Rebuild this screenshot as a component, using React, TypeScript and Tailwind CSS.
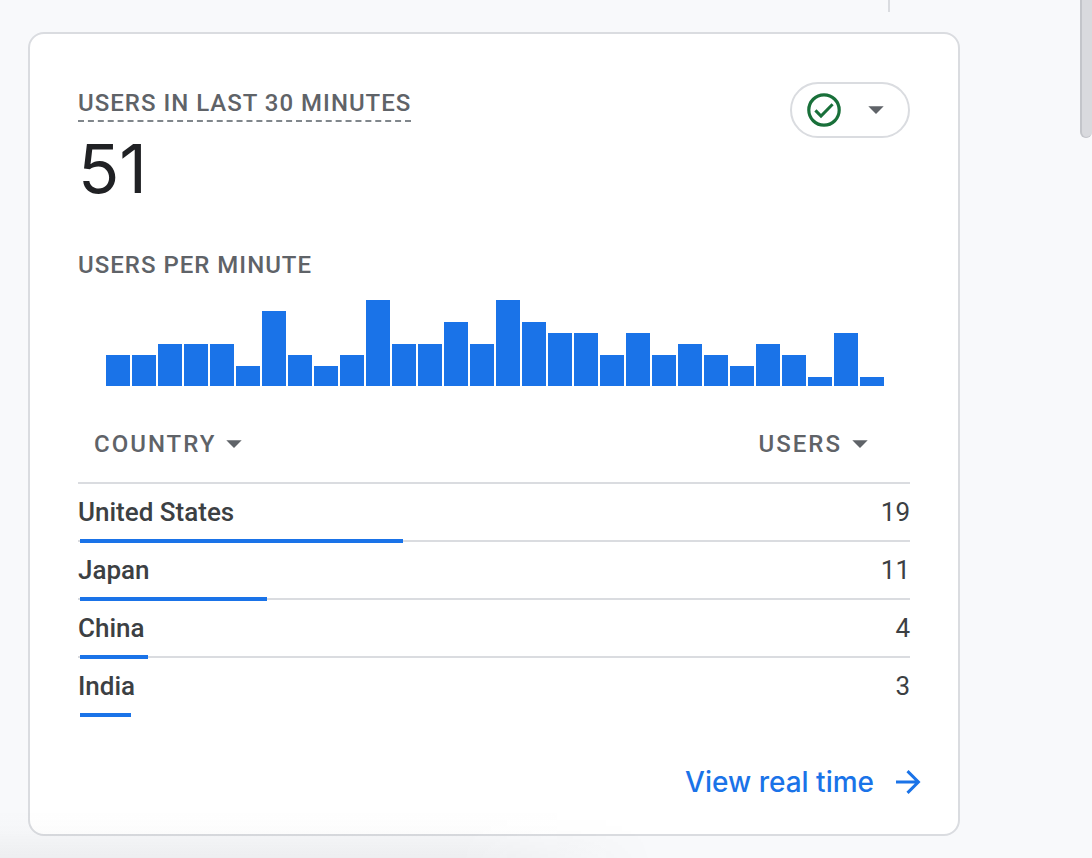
const usersPerMinute = [
  3, 3, 4, 4, 4, 2, 7, 3, 2, 3, 8, 4, 4, 6, 4, 8, 6, 5, 5, 3, 5, 3, 4, 3, 2, 4,
  3, 1, 5, 1,
];

const countries = [
  { name: "United States", users: 19 },
  { name: "Japan", users: 11 },
  { name: "China", users: 4 },
  { name: "India", users: 3 },
];

const TOTAL_USERS = 49;

function Caret() {
  return (
    <svg
      viewBox="0 0 16 8"
      className="h-2 w-4 shrink-0 fill-[#5f6368]"
      aria-hidden="true"
    >
      <path d="M0.3 0.3h15.4L8 8z" />
    </svg>
  );
}

function StatusButton() {
  return (
    <button
      type="button"
      aria-label="Data quality"
      className="flex h-14 w-30 shrink-0 items-center justify-between rounded-full border-2 border-[#dadce0] bg-white pr-6 pl-[15px]"
    >
      <svg viewBox="0 0 34 34" className="size-[34px]" fill="none" stroke="#19703a">
        <circle cx="17" cy="17" r="15.2" strokeWidth="3.2" />
        <path d="M8.4 17.4l5.6 5.7L25.6 11.3" strokeWidth="3" />
      </svg>
      <Caret />
    </button>
  );
}

function MinuteChart() {
  return (
    <div
      role="img"
      aria-label="Users per minute"
      className="mt-5 mr-[26px] ml-7 flex h-[86px] items-end gap-0.5"
    >
      {usersPerMinute.map((count, index) => (
        <div
          key={index}
          className="flex-1 bg-[#1a73e8]"
          style={{ height: count * 11 - 2 }}
        />
      ))}
    </div>
  );
}

function CountryTable() {
  return (
    <table className="mt-[18px] w-full border-separate border-spacing-0 text-[#3c4043]">
      <thead>
        <tr className="text-2xl text-[#5f6368]">
          <th className="h-20 border-b-2 border-[#dadce0] pt-0.5 pr-0 pb-0 pl-4 text-left font-medium">
            <button
              type="button"
              className="inline-flex items-center gap-2.5 tracking-[2px]"
            >
              COUNTRY
              <Caret />
            </button>
          </th>
          <th className="h-20 border-b-2 border-[#dadce0] pt-0.5 pr-[42px] pb-0 pl-0 text-right font-medium">
            <button
              type="button"
              className="inline-flex items-center gap-2.5 tracking-[2px]"
            >
              USERS
              <Caret />
            </button>
          </th>
        </tr>
      </thead>
      <tbody>
        {countries.map((country) => (
          <tr key={country.name} className="group relative text-[26px] leading-8">
            <td className="h-[58px] border-b-2 border-[#dadce0] p-0 font-medium group-last:border-transparent">
              {country.name}
              <div
                className="absolute -bottom-px left-0.5 h-1 bg-[#1a73e8]"
                style={{ width: `${(country.users / TOTAL_USERS) * 100}%` }}
              />
            </td>
            <td className="h-[58px] border-b-2 border-[#dadce0] p-0 text-right group-last:border-transparent">
              {country.users}
            </td>
          </tr>
        ))}
      </tbody>
    </table>
  );
}

function RealtimeCard() {
  return (
    <section className="rounded-2xl border-2 border-[#dadce0] bg-white px-12 pt-12 pb-8">
      <div className="flex items-start justify-between">
        <div className="pt-1.5">
          <h2 className="border-b-2 border-dashed border-[#80868b] pb-0.5 text-2xl leading-[30px] font-medium tracking-[1px] text-[#5f6368]">
            USERS IN LAST 30 MINUTES
          </h2>
          <p className="mt-2.5 font-['Inter',sans-serif] text-[68px] leading-[72px] text-[#202124]">
            51
          </p>
        </div>
        <StatusButton />
      </div>

      <h3 className="mt-[46px] text-2xl leading-[30px] font-medium tracking-[1px] text-[#5f6368]">
        USERS PER MINUTE
      </h3>
      <MinuteChart />
      <CountryTable />

      <div className="mt-[46px] -mr-[11px] flex justify-end">
        <a
          href="#realtime"
          className="flex items-center gap-[22px] font-['Inter',sans-serif] text-[28px] leading-10 font-medium text-[#1a73e8]"
        >
          View real time
          <svg
            viewBox="0 0 25 24"
            className="h-6 w-[25px]"
            fill="none"
            stroke="currentColor"
            strokeWidth="3"
            aria-hidden="true"
          >
            <path d="M0 12h22M11.5 1.1L22.4 12 11.5 22.9" />
          </svg>
        </a>
      </div>
    </section>
  );
}

export default function App() {
  return (
    <div className="relative flex min-h-screen bg-[#f8f9fb] font-['Roboto',sans-serif]">
      <main className="min-w-0 flex-1 pr-30 pb-[22px] pl-7">
        <div className="flex h-8 justify-end pr-[70px]">
          <div className="h-3 w-0.5 bg-[#dadce0]" />
        </div>
        <RealtimeCard />
      </main>
      <div className="w-3 shrink-0">
        <div className="h-[138px] rounded-b-md border-b border-l-2 border-[#c3c5ca] bg-[#d9dade]" />
      </div>
      <div className="pointer-events-none absolute bottom-0 left-0 h-12 w-3/5 bg-[linear-gradient(to_top,rgba(40,40,40,0.05),rgba(40,40,40,0.01)_60%,transparent)] [mask-image:linear-gradient(to_right,black_70%,transparent)]" />
    </div>
  );
}
